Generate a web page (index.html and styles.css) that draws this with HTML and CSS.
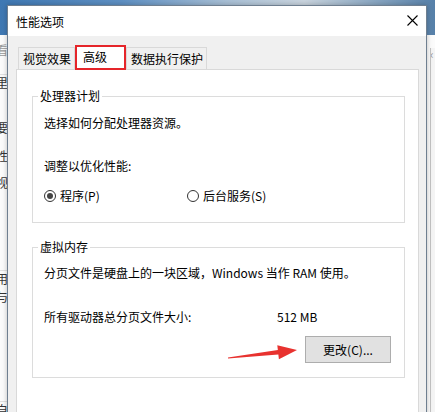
FILE: index.html
```html
<!DOCTYPE html>
<html lang="zh-CN">
<head>
<meta charset="utf-8">
<title>性能选项</title>
<link rel="stylesheet" href="styles.css">
</head>
<body>
<div class="desktop">
  <div class="bgwin">
    <div class="bg-band"></div>
    <div class="bg-main">
      <div class="bg-left">
        <div class="frag f1 light">看</div>
        <div class="frag f2 sep">里</div>
        <div class="frag f3">要</div>
        <div class="frag f4">性</div>
        <div class="frag f5">视</div>
        <div class="frag f6 sep">用</div>
        <div class="frag f7">与</div>
        <div class="frag f8 sep">自</div>
      </div>
      <div class="bg-spacer"></div>
      <div class="bg-right"><span class="chev">&lsaquo;</span></div>
    </div>
  </div>

  <div class="dialog">
    <div class="titlebar">
      <span class="title">性能选项</span>
      <svg class="close" width="11" height="11" viewBox="0 0 11 11"><path d="M0.5 0.5L10.5 10.5M10.5 0.5L0.5 10.5" stroke="#000" stroke-width="1.1" fill="none"/></svg>
    </div>
    <div class="body">
      <div class="tabs">
        <div class="tab">视觉效果</div>
        <div class="tab active">高级</div>
        <div class="tab">数据执行保护</div>
      </div>
      <div class="panel">
        <div class="group g1">
          <div class="group-label">处理器计划</div>
          <div class="line l1">选择如何分配处理器资源。</div>
          <div class="line l2">调整以优化性能:</div>
          <div class="line radios">
            <div class="opt"><span class="radio on"></span><span>程序(P)</span></div>
            <div class="opt"><span class="radio"></span><span>后台服务(S)</span></div>
          </div>
        </div>
        <div class="group g2">
          <div class="group-label">虚拟内存</div>
          <div class="line m1">分页文件是硬盘上的一块区域，Windows 当作 RAM 使用。</div>
          <div class="line m2 sizerow"><span class="sizelabel">所有驱动器总分页文件大小:</span><span>512 MB</span></div>
          <div class="btnrow"><button class="btn">更改(C)...</button></div>
        </div>
      </div>
    </div>
  </div>

  <svg class="arrow" width="435" height="412" viewBox="0 0 435 412">
    <polygon points="228,357.4 277.85,350 277.3,345.2 297,350 278.9,359.2 278.35,354.4 228,358.6" fill="#e8322f"/>
  </svg>
</div>
</body>
</html>
```
FILE: styles.css
```css
* { box-sizing: border-box; }
html, body { margin: 0; padding: 0; }
body {
  font-family: "Noto Sans CJK SC", "Microsoft YaHei", sans-serif;
  font-size: 12px;
  color: #000;
  width: 435px;
  height: 412px;
  overflow: hidden;
}
.desktop {
  position: relative;
  width: 435px;
  height: 412px;
  overflow: hidden;
  background: #fbfbfb;
}
.bgwin { display: flex; flex-direction: column; height: 412px; }
.bg-band {
  height: 35px;
  flex: none;
  background: linear-gradient(90deg, #3f78b3 0%, #5e90c3 28%, #a8bfd5 52%, #c9d4de 70%, #8aa7c2 86%, #5680a9 100%);
}
.bg-main { flex: 1; display: flex; }
.bg-left { width: 20px; overflow: hidden; }
.bg-spacer { flex: 1; }
.bg-right {
  width: 5px;
  margin-top: 13px;
  border-left: 1px solid #c2c2c2;
  background: #f4f4f4;
  overflow: hidden;
}
.chev { display: block; color: #999; font-size: 12px; line-height: 12px; margin-left: -1px; }
.frag { line-height: 16px; margin-left: -4px; color: #333; font-size: 12px; }
.frag.light { color: #999; }
.frag.sep { border-top: 1px solid #e0e0e0; }
.f1 { margin-top: 7px; }
.f2 { margin-top: 16px; }
.f3 { margin-top: 29px; }
.f4 { margin-top: 12px; }
.f5 { margin-top: 11px; }
.f6 { margin-top: 79px; }
.f7 { margin-top: 2px; }
.f8 { margin-top: 96px; }

.dialog {
  position: absolute;
  left: 7px;
  top: 5px;
  width: 420px;
  height: 420px;
  border: 1px solid #6f7f90;
  background: #f0f0f0;
  box-shadow: 0 0 5px rgba(0, 0, 0, 0.25);
}
.titlebar {
  height: 30px;
  background: #fff;
  display: flex;
  align-items: center;
  justify-content: space-between;
  padding: 0 8px 0 8px;
}
.title { padding-top: 2px; line-height: 16px; }
.close { display: block; margin-top: -1px; }

.body { padding: 9px 7px 0 8px; }
.tabs {
  display: flex;
  align-items: flex-end;
  margin-left: 2px;
  height: 24px;
}
.tab {
  height: 22px;
  border: 1px solid #d9d9d9;
  border-bottom: none;
  background: #f0f0f0;
  line-height: 21px;
  padding: 0 3px 0 4px;
  white-space: nowrap;
}
.tab.active {
  position: relative;
  z-index: 2;
  height: 25px;
  margin-bottom: -1px;
  background: #fff;
  border: 2px solid #e5252a;
  line-height: 20px;
  padding: 0 17px 0 6px;
}
.panel {
  background: #fff;
  border: 1px solid #d9d9d9;
  height: 400px;
  padding: 1px 13px 0 15px;
}
.group { border: 1px solid #dcdcdc; }
.g1 { margin-top: 25px; padding-bottom: 18px; }
.g2 { margin-top: 24px; padding-bottom: 14px; }
.group-label {
  width: fit-content;
  margin: -9px 0 0 5px;
  padding: 0 2px;
  background: #fff;
  line-height: 16px;
}
.line { padding-left: 11px; line-height: 16px; white-space: nowrap; }
.l1 { margin-top: 11px; }
.l2 { margin-top: 27px; }
.radios {
  margin-top: 14px;
  display: grid;
  grid-template-columns: 143px auto;
}
.opt { display: flex; align-items: center; gap: 4px; }
.radio {
  width: 12px;
  height: 12px;
  border: 1px solid #333;
  border-radius: 50%;
  background: #fff;
  display: flex;
  align-items: center;
  justify-content: center;
}
.radio.on::after {
  content: "";
  width: 6px;
  height: 6px;
  border-radius: 50%;
  background: #444;
}
.m1 { margin-top: 10px; }
.m2 { margin-top: 28px; }
.sizerow { display: flex; }
.sizelabel { width: 233px; }
.btnrow {
  margin-top: 11px;
  display: flex;
  justify-content: flex-end;
  padding-right: 13px;
}
.btn {
  width: 86px;
  height: 27px;
  background: #e1e1e1;
  border: 1px solid #adadad;
  font: inherit;
  color: #000;
  line-height: 25px;
  padding: 0;
  text-align: center;
}
.arrow { position: absolute; left: 0; top: 0; pointer-events: none; }
```
